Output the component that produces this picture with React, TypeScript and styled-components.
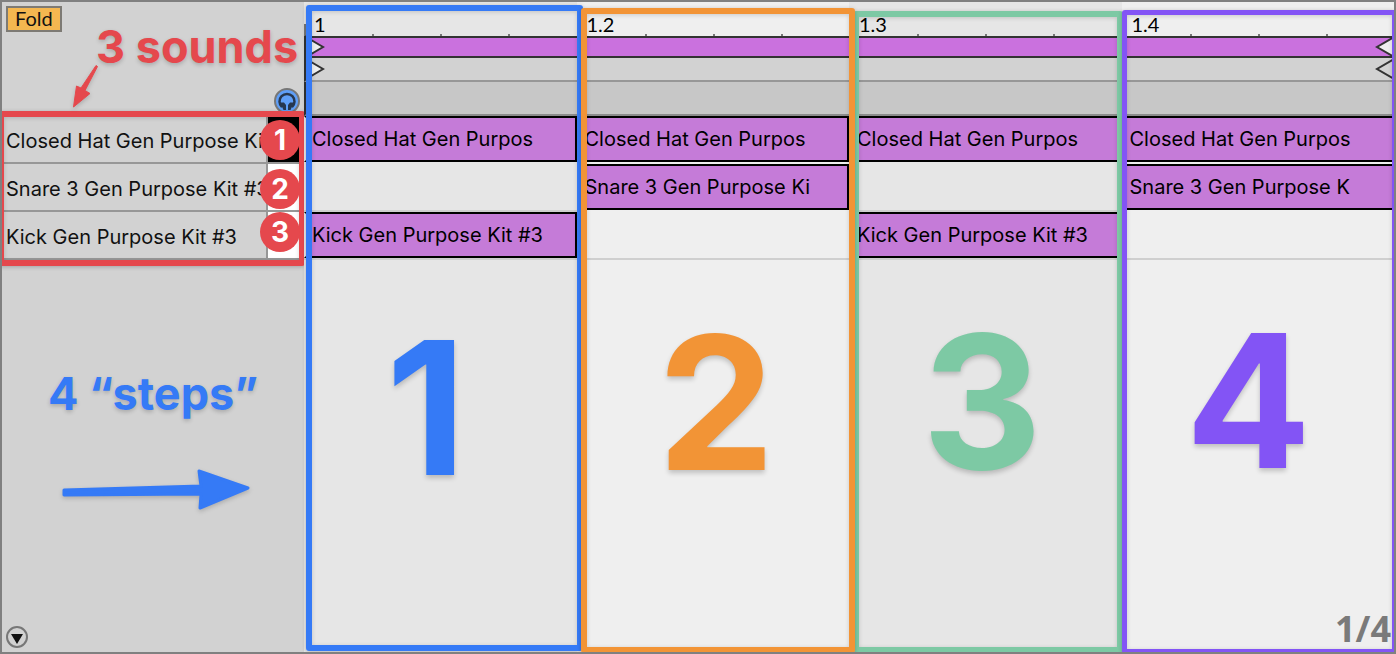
import React from "react";
import styled, { createGlobalStyle } from "styled-components";

const RED = "#e5484d";
const BLUE = "#357af6";

const GlobalStyle = createGlobalStyle`
  *, *::before, *::after { box-sizing: border-box; }
  body { margin: 0; background: #d2d2d2; font-family: Inter, sans-serif; }
`;

const Editor = styled.main`
  position: relative;
  display: flex;
  min-height: 100vh;
  border: 2px solid #808080;
  overflow: hidden;
  color: #111;
  font-size: 20px;
  line-height: 24px;
`;

const Sidebar = styled.aside`
  position: relative;
  flex: none;
  display: flex;
  flex-direction: column;
  width: 302px;
  background: #d2d2d2;
`;

const SidebarHeader = styled.header`
  display: flex;
  justify-content: space-between;
  height: 114px;
  padding: 4px 4px 2px;
`;

const FoldButton = styled.button`
  height: 26px;
  padding: 0 7px 2px;
  border: 2px solid #7d7a74;
  background: #f4b750;
  color: #111;
  font: 20px/20px Lato, sans-serif;
`;

const IconButton = styled.button`
  display: block;
  align-self: flex-end;
  padding: 0;
  border: 0;
  background: none;
  line-height: 0;
`;

const TrackArea = styled.div`
  position: relative;
`;

const TrackList = styled.ul`
  margin: 0;
  padding: 0;
  list-style: none;
`;

const Track = styled.li`
  display: flex;
  height: 48px;
  padding-right: 4px;
  border-bottom: 2px solid #979797;
`;

const TrackName = styled.span`
  flex: 1;
  min-width: 0;
  padding: 13px 0 0 4px;
  overflow: hidden;
  white-space: nowrap;
`;

const PianoKey = styled.span<{ $dark?: boolean }>`
  width: 34px;
  border-left: 2px solid #979797;
  background: ${(p) => (p.$dark ? "#000" : "#fff")};
`;

const SidebarFooter = styled.footer`
  display: flex;
  margin-top: auto;
  padding: 4px;
`;

const Roll = styled.section`
  position: relative;
  flex: 1;
  display: flex;
  flex-direction: column;
  min-width: 0;
`;

const Columns = styled.div`
  display: grid;
  grid-template-columns: repeat(4, minmax(0, 1fr));
`;

const RulerBeat = styled.div<{ $alt: boolean }>`
  display: grid;
  grid-template-columns: repeat(4, 1fr);
  height: 34px;
  background: ${(p) => (p.$alt ? "#efefef" : "#e6e6e6")};
`;

const Sixteenth = styled.div<{ $major: boolean }>`
  padding: 10px 0 0 ${(p) => (p.$major ? 10 : 0)}px;
  background: linear-gradient(#777, #777) left bottom / 2px ${(p) => (p.$major ? 12 : 2)}px no-repeat;
  font-family: Lato, sans-serif;
  color: #000;
`;

const LoopBar = styled.div`
  display: flex;
  justify-content: space-between;
  height: 22px;
  border: solid #333;
  border-width: 2px 0 2px 2px;
  background: #ca71de;
`;

const MarkerLane = styled.div`
  display: flex;
  align-items: center;
  justify-content: space-between;
  height: 24px;
  border-bottom: 2px solid #979797;
  border-left: 2px solid #333;
  background: #d2d2d2;
`;

const EmptyLane = styled.div`
  height: 34px;
  border-bottom: 2px solid #8c8c8c;
  border-left: 2px solid #333;
  background: #c7c7c7;
`;

const NoteGrid = styled(Columns)`
  flex: 1;
`;

const Cell = styled.div<{ $line: boolean }>`
  height: 48px;
  border-bottom: 2px solid ${(p) => (p.$line ? "#cfcfcf" : "transparent")};
`;

const Clip = styled.div`
  height: 46px;
  padding: 9px 6px;
  border: 2px solid #000;
  background: #c57bd8;
  color: #000;
  overflow: hidden;
  white-space: nowrap;
`;

const Beat = styled.div<{ $alt: boolean }>`
  background: ${(p) => (p.$alt ? "#efefef" : "#e6e6e6")};

  &:first-child ${Clip} {
    border-left-color: #e6e6e6;
  }
`;

const ZoomRatio = styled.div`
  position: absolute;
  right: 3px;
  bottom: 3px;
  color: #7a7a7a;
  font: 700 36px/40px "Open Sans", sans-serif;
`;

const Annotations = styled(Columns)`
  position: absolute;
  inset: 0;
  pointer-events: none;
`;

const StepMark = styled.div<{ $z: number }>`
  position: relative;
  z-index: ${(p) => p.$z};
`;

const Frame = styled.div<{ $inset: string; $color: string; $width: number }>`
  position: absolute;
  inset: ${(p) => p.$inset};
  border: ${(p) => p.$width}px solid ${(p) => p.$color};
  border-radius: 3px;
  box-shadow: 0 1px 4px rgba(0, 0, 0, 0.22), inset 0 1px 4px rgba(0, 0, 0, 0.16);
`;

const StepNumber = styled.span<{ $color: string; $left: number; $top: number }>`
  position: absolute;
  left: ${(p) => p.$left}px;
  top: ${(p) => p.$top}px;
  color: ${(p) => p.$color};
  font-size: 186px;
  font-weight: 700;
  line-height: 186px;
  text-shadow: 0 3px 5px rgba(0, 0, 0, 0.2);
`;

const Caption = styled.span<{ $color: string; $left: number; $top: number }>`
  position: absolute;
  left: ${(p) => p.$left}px;
  top: ${(p) => p.$top}px;
  color: ${(p) => p.$color};
  font-size: 45px;
  font-weight: 700;
  line-height: 56px;
  white-space: nowrap;
  text-shadow: 0 2px 4px rgba(0, 0, 0, 0.2);
`;

const Badge = styled.span<{ $top: number }>`
  position: absolute;
  left: 258px;
  top: ${(p) => p.$top}px;
  width: 40px;
  height: 40px;
  border-radius: 50%;
  background: ${RED};
  color: #fff;
  font-size: 28px;
  font-weight: 700;
  line-height: 40px;
  text-align: center;
`;

const Arrow = styled.svg<{ $left: number; $top: number }>`
  position: absolute;
  left: ${(p) => p.$left}px;
  top: ${(p) => p.$top}px;
  overflow: visible;
  filter: drop-shadow(0 2px 2px rgba(0, 0, 0, 0.18));
`;

const tracks = [
  { name: "Closed Hat Gen Purpose Kit #3", dark: true },
  { name: "Snare 3 Gen Purpose Kit #3" },
  { name: "Kick Gen Purpose Kit #3" },
];

const HAT = "Closed Hat Gen Purpos";
const KICK = "Kick Gen Purpose Kit #3";

const beats = [
  { label: "1", clips: [HAT, null, KICK] },
  { label: "1.2", clips: [HAT, "Snare 3 Gen Purpose Ki", null] },
  { label: "1.3", clips: [HAT, null, KICK] },
  { label: "1.4", clips: [HAT, "Snare 3 Gen Purpose K", null] },
];

const steps = [
  { color: BLUE, inset: "3px -6px 1px 2px", width: 6, z: 1, left: 82, top: 313 },
  { color: "#f29436", inset: "6px -6px -1px 4px", width: 6, z: 3, left: 81, top: 308 },
  { color: "#7dc9a4", inset: "9px -1px -1px 4px", width: 6, z: 2, left: 73, top: 307 },
  { color: "#8354f5", inset: "8px -3px -2px 0", width: 5, z: 4, left: 64, top: 306 },
];

const StartMarker = () => (
  <svg width="18" height="18" viewBox="0 0 18 18" overflow="visible" aria-hidden="true">
    <path d="M0 -1 L17 9 L0 19 Z" fill="#efefef" stroke="#333" strokeWidth="2" />
  </svg>
);

const EndMarker = ({ fill }: { fill: string }) => (
  <svg width="18" height="18" viewBox="0 0 18 18" overflow="visible" aria-hidden="true">
    <path d="M18 -1 L1 9 L18 19" fill={fill} stroke="#333" strokeWidth="2" />
  </svg>
);

export default function App() {
  return (
    <>
      <GlobalStyle />
      <Editor>
        <Sidebar>
          <SidebarHeader>
            <FoldButton>Fold</FoldButton>
            <IconButton aria-label="Preview">
              <svg width="26" height="26" viewBox="0 0 26 26">
                <circle cx="13" cy="13" r="12" fill="#5f9ff8" stroke="#777" strokeWidth="2" />
                <path d="M8 19 A7.5 7.5 0 1 1 18 19" fill="none" stroke="#26374f" strokeWidth="2.5" />
                <path d="M6 14.5 L10 14.5 L12 17 V22 H9.5 Z M20 14.5 L16 14.5 L14 17 V22 H16.5 Z" fill="#26374f" />
              </svg>
            </IconButton>
          </SidebarHeader>
          <TrackArea>
            <TrackList>
              {tracks.map((t) => (
                <Track key={t.name}>
                  <TrackName>{t.name}</TrackName>
                  <PianoKey $dark={t.dark} />
                </Track>
              ))}
            </TrackList>
            <Frame $inset="-5px -1px -6px -4px" $color={RED} $width={6} />
            <Badge $top={4}>1</Badge>
            <Badge $top={53}>2</Badge>
            <Badge $top={96}>3</Badge>
          </TrackArea>
          <SidebarFooter>
            <IconButton aria-label="Show lanes">
              <svg width="22" height="22" viewBox="0 0 22 22">
                <circle cx="11" cy="11" r="10" fill="none" stroke="#777" strokeWidth="2" />
                <path d="M5 8 H17 L11 18 Z" fill="#111" />
              </svg>
            </IconButton>
          </SidebarFooter>

          <Arrow $left={70} $top={62} width="30" height="45" aria-hidden="true">
            <path
              d="M24 1.5 L9 24 L4.5 22 L1.5 43 L18 29.5 L13 26.5 L25.5 2.5 Z"
              fill={RED}
              stroke={RED}
              strokeLinejoin="round"
            />
          </Arrow>
          <Caption $color={RED} $left={94} $top={17}>3 sounds</Caption>
          <Caption $color={BLUE} $left={46} $top={364}>4 “steps”</Caption>
          <Arrow $left={60} $top={466} width="188" height="42" aria-hidden="true">
            <path
              d="M2 22 L139 18 L137 3 L186 20 L138 40 L139 26 L2 27 Z"
              fill={BLUE}
              stroke={BLUE}
              strokeWidth="3"
              strokeLinejoin="round"
            />
          </Arrow>
        </Sidebar>

        <Roll>
          <Columns>
            {beats.map((b, i) => (
              <RulerBeat key={b.label} $alt={i % 2 === 1}>
                {[0, 1, 2, 3].map((n) => (
                  <Sixteenth key={n} $major={n === 0}>{n === 0 ? b.label : null}</Sixteenth>
                ))}
              </RulerBeat>
            ))}
          </Columns>
          <LoopBar>
            <StartMarker />
            <EndMarker fill="#efefef" />
          </LoopBar>
          <MarkerLane>
            <StartMarker />
            <EndMarker fill="#d2d2d2" />
          </MarkerLane>
          <EmptyLane />
          <NoteGrid>
            {beats.map((b, i) => (
              <Beat key={b.label} $alt={i % 2 === 1}>
                {b.clips.map((clip, row) => (
                  <Cell key={row} $line={row === 2 || (row === 1 && !clip)}>
                    {clip && <Clip>{clip}</Clip>}
                  </Cell>
                ))}
              </Beat>
            ))}
          </NoteGrid>
          <ZoomRatio>1/4</ZoomRatio>
          <Annotations>
            {steps.map((s, i) => (
              <StepMark key={s.color} $z={s.z}>
                <Frame $inset={s.inset} $color={s.color} $width={s.width} />
                <StepNumber $color={s.color} $left={s.left} $top={s.top}>{i + 1}</StepNumber>
              </StepMark>
            ))}
          </Annotations>
        </Roll>
      </Editor>
    </>
  );
}
